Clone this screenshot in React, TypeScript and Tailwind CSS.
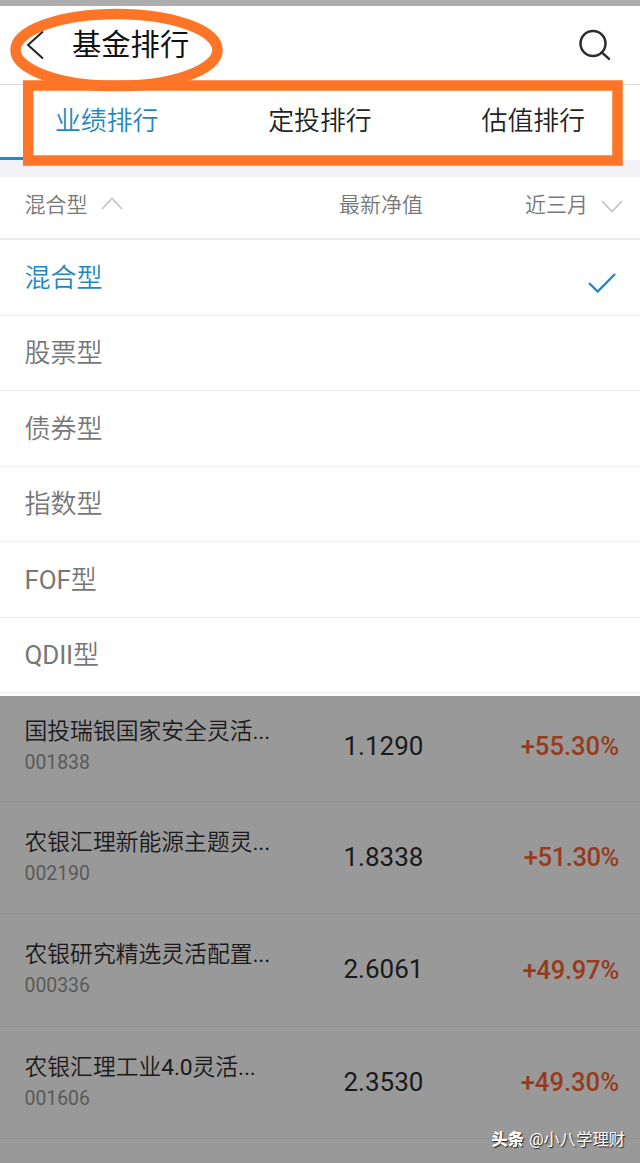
const TABS = ['业绩排行', '定投排行', '估值排行'];

const TYPES = ['混合型', '股票型', '债券型', '指数型', 'FOF型', 'QDII型'];

const FUNDS = [
  { name: '国投瑞银国家安全灵活...', code: '001838', value: '1.1290', change: '+55.30%', tracking: '' },
  { name: '农银汇理新能源主题灵...', code: '002190', value: '1.8338', change: '+51.30%', tracking: 'tracking-[-0.45px]' },
  { name: '农银研究精选灵活配置...', code: '000336', value: '2.6061', change: '+49.97%', tracking: 'tracking-[-0.25px]' },
  { name: '农银汇理工业4.0灵活...', code: '001606', value: '2.3530', change: '+49.30%', tracking: '' },
];

// Latin runs use the regular weight next to the lighter Chinese glyphs.
function MixedText({ text }: { text: string }) {
  return (
    <>
      {text.split(/([A-Za-z0-9.]+)/).map((part, i) =>
        i % 2 === 1 ? (
          <span key={i} className="font-normal tracking-[-0.15px]">
            {part}
          </span>
        ) : (
          part
        ),
      )}
    </>
  );
}

function Header() {
  return (
    <header className="flex h-[79px] items-center justify-between border-b border-[#d9d9d9] pr-[29px] pl-[26px]">
      <div className="flex items-center">
        <svg className="h-[30px] w-[20px]" viewBox="0 0 20 30" fill="none" stroke="#222" strokeWidth="2">
          <path d="M17 1.5 2 15l15 13.5" />
        </svg>
        <h1 className="ml-[26px] text-[29.3px] leading-[40px] text-[#111]">基金排行</h1>
      </div>
      <svg className="h-[32px] w-[32px]" viewBox="0 0 32 32" fill="none" stroke="#2d2d2d" strokeWidth="2.5">
        <circle cx="14" cy="14.5" r="12.5" />
        <path d="m22.8 23.3 7.2 6.6" strokeLinecap="round" />
      </svg>
    </header>
  );
}

function Tabs() {
  return (
    <nav className="grid h-[75px] grid-cols-3">
      {TABS.map((tab, i) => (
        <button
          key={tab}
          className={
            i === 0
              ? 'border-b-[3px] border-[#1e8bcb] text-[25.9px] leading-[36px] font-[350] text-[#1e88c4]'
              : 'border-b-[3px] border-transparent text-[25.9px] leading-[36px] font-[350] text-[#222]'
          }
        >
          {tab}
        </button>
      ))}
    </nav>
  );
}

function Filters() {
  return (
    <div className="flex h-[63px] items-center border-b-2 border-[#ebebed] pb-[3px] pl-[24.5px] text-[21px] font-[350] text-[#777]">
      <div className="flex w-[314.5px] shrink-0 items-center">
        混合型
        <svg className="mb-[5px] ml-[13px] h-[13px] w-[22px]" viewBox="0 0 22 13" fill="none" stroke="#c2c2c2" strokeWidth="1.6">
          <path d="M1 12 11 1.5 21 12" />
        </svg>
      </div>
      <div className="w-[186px] shrink-0">最新净值</div>
      <div className="flex items-center whitespace-nowrap">
        近三月
        <svg className="ml-[13px] h-[13px] w-[22px] shrink-0" viewBox="0 0 22 13" fill="none" stroke="#c2c2c2" strokeWidth="1.6">
          <path d="M1 1 11 11.5 21 1" />
        </svg>
      </div>
    </div>
  );
}

function TypeMenu() {
  return (
    <ul className="h-[456px] bg-white">
      {TYPES.map((type, i) => (
        <li
          key={type}
          className="flex h-[75.5px] items-center justify-between border-b border-[#ececec] px-[24.5px] pt-px text-[26px] leading-[36px] font-[350] text-[#777]"
        >
          <span className={i === 0 ? 'text-[#1e88c4]' : ''}>
            <MixedText text={type} />
          </span>
          {i === 0 && (
            <svg className="mt-[11px] h-[20px] w-[28px]" viewBox="0 0 28 20" fill="none" stroke="#1e88cc" strokeWidth="2.4">
              <path d="m1 10 8.7 8.5L27 1" />
            </svg>
          )}
        </li>
      ))}
    </ul>
  );
}

function FundList() {
  return (
    <ul className="flex-1 overflow-hidden bg-[#999]">
      {FUNDS.map((fund, i) => (
        <li
          key={fund.code}
          className={
            i === 0
              ? 'flex h-[106px] items-center border-b border-[#8f8f8f] pr-[21px] pb-[5px] pl-[24.5px]'
              : 'flex h-[112.3px] items-center border-b border-[#8f8f8f] pr-[21px] pl-[24.5px]'
          }
        >
          <div className="w-[319px] pt-px">
            <div className="text-[22.8px] leading-[32px] font-[350] text-[#1a1a1a]">
              <MixedText text={fund.name} />
            </div>
            <div className="text-[19.4px] leading-[30px] text-[#5a5a5a]">{fund.code}</div>
          </div>
          <div className="text-[26px] text-[#1a1a1a]">{fund.value}</div>
          <div className={`ml-auto text-[25.6px] font-medium text-[#963c1c] ${fund.tracking}`}>{fund.change}</div>
        </li>
      ))}
    </ul>
  );
}

export default function App() {
  return (
    <div className="relative flex h-[1163px] w-[640px] flex-col overflow-hidden bg-white font-[Roboto,'Noto_Sans_CJK_SC',sans-serif]">
      <div className="h-[6px] bg-[#adadad]" />
      <Header />
      <Tabs />
      <div className="h-[17px] bg-[#f2f2f7]" />
      <Filters />
      <TypeMenu />
      <FundList />

      <svg
        className="pointer-events-none absolute top-0 left-0 h-[180px] w-[640px]"
        viewBox="0 0 640 180"
        fill="none"
        stroke="#fe7528"
        strokeWidth="10.5"
      >
        <ellipse cx="116.5" cy="50" rx="101" ry="36" />
        <rect x="28.2" y="85.5" width="589.3" height="75" />
      </svg>

      <div className="absolute right-[15px] bottom-[11px] flex items-center gap-[5px] text-[16.3px] leading-[24px] text-white [text-shadow:1px_1px_1px_#222]">
        <b className="font-black">头条</b>
        <span>@小八学理财</span>
      </div>
    </div>
  );
}
